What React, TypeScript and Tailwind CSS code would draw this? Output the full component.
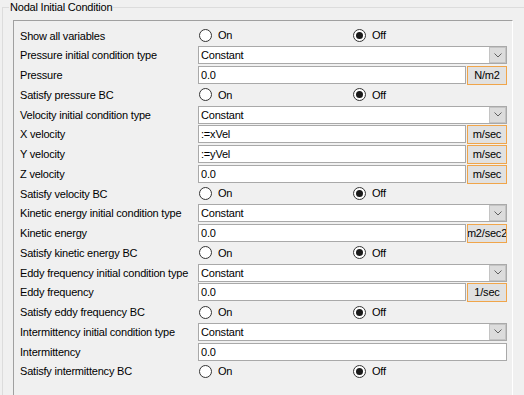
import React from "react";

type Row =
  | { kind: "radio"; label: string; on: boolean }
  | { kind: "combo"; label: string; value: string }
  | { kind: "field"; label: string; value: string; unit?: string };

const rows: Row[] = [
  { kind: "radio", label: "Show all variables", on: false },
  { kind: "combo", label: "Pressure initial condition type", value: "Constant" },
  { kind: "field", label: "Pressure", value: "0.0", unit: "N/m2" },
  { kind: "radio", label: "Satisfy pressure BC", on: false },
  { kind: "combo", label: "Velocity initial condition type", value: "Constant" },
  { kind: "field", label: "X velocity", value: ":=xVel", unit: "m/sec" },
  { kind: "field", label: "Y velocity", value: ":=yVel", unit: "m/sec" },
  { kind: "field", label: "Z velocity", value: "0.0", unit: "m/sec" },
  { kind: "radio", label: "Satisfy velocity BC", on: false },
  { kind: "combo", label: "Kinetic energy initial condition type", value: "Constant" },
  { kind: "field", label: "Kinetic energy", value: "0.0", unit: "m2/sec2" },
  { kind: "radio", label: "Satisfy kinetic energy BC", on: false },
  { kind: "combo", label: "Eddy frequency initial condition type", value: "Constant" },
  { kind: "field", label: "Eddy frequency", value: "0.0", unit: "1/sec" },
  { kind: "radio", label: "Satisfy eddy frequency BC", on: false },
  { kind: "combo", label: "Intermittency initial condition type", value: "Constant" },
  { kind: "field", label: "Intermittency", value: "0.0" },
  { kind: "radio", label: "Satisfy intermittency BC", on: false },
];

function Radio({ checked, text }: { checked: boolean; text: string }) {
  return (
    <div className="flex items-center h-[18px] w-[154px]">
      <span className="ml-[1px] w-[13px] h-[13px] rounded-full border border-[#333333] bg-white flex items-center justify-center">
        {checked && <span className="w-[7px] h-[7px] rounded-full bg-[#1a1a1a]" />}
      </span>
      <span className="ml-[6px]">{text}</span>
    </div>
  );
}

function Combo({ value }: { value: string }) {
  return (
    <div className="flex-1 h-[18px] flex bg-white border border-[#a9a9a9]">
      <span className="flex-1 pl-[2px] leading-[16px]">{value}</span>
      <span className="w-[17px] h-full bg-[#dcdcdc] border border-[#c4c4c4] flex items-center justify-center">
        <svg width="8" height="5" viewBox="0 0 8 5" fill="none" stroke="#606060" strokeWidth="1">
          <path d="M0.5 0.5 L4 4 L7.5 0.5" />
        </svg>
      </span>
    </div>
  );
}

function Field({ value, unit }: { value: string; unit?: string }) {
  return (
    <div className="flex-1 flex items-start gap-[1px]">
      <div className="flex-1 h-[18px] bg-white border border-[#a9a9a9] pl-[2px] leading-[16px]">{value}</div>
      {unit && (
        <div className="w-[40px] h-[19px] shrink-0 bg-[#e1e1e1] border border-[#f0a54a] overflow-hidden flex justify-center leading-[17px] whitespace-nowrap">
          {unit}
        </div>
      )}
    </div>
  );
}

export default function App() {
  return (
    <div
      className="w-[524px] h-[395px] overflow-hidden bg-[#f0f0f0] text-black text-[11px] tracking-[-0.2px] pl-[2px] pt-[7px]"
      style={{ fontFamily: '"Liberation Sans", Arial, sans-serif' }}
    >
      {/* Group box */}
      <div className="relative w-[540px] h-[420px] border-t border-l border-[#dcdcdc]">
        <span className="absolute -top-[8px] left-[6px] px-[1px] bg-[#f0f0f0] leading-[14px]">
          Nodal Initial Condition
        </span>

        {/* Sunken panel */}
        <div className="ml-[10px] mt-[12px] w-[500px] h-[400px] border-t border-l border-[#a0a0a0] border-r border-r-white pl-[6px] pr-[5px] pt-[5.5px]">
          {rows.map((r, i) => (
            <div key={i} className="flex items-start h-[19.75px]">
              <div className="w-[178px] h-[18px] leading-[18px] whitespace-nowrap">{r.label}</div>
              {r.kind === "radio" && (
                <div className="flex flex-1">
                  <Radio checked={r.on} text="On" />
                  <Radio checked={!r.on} text="Off" />
                </div>
              )}
              {r.kind === "combo" && <Combo value={r.value} />}
              {r.kind === "field" && <Field value={r.value} unit={r.unit} />}
            </div>
          ))}
        </div>
      </div>
    </div>
  );
}
